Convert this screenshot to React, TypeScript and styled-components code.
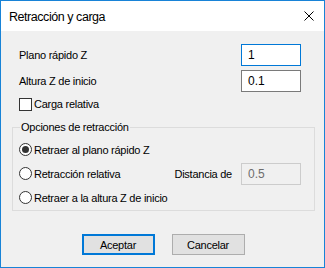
import React from 'react';
import styled, { createGlobalStyle } from 'styled-components';

const GlobalStyle = createGlobalStyle`
  html, body {
    margin: 0;
    padding: 0;
    background: #ffffff;
  }
  * {
    box-sizing: border-box;
  }
`;

const StyledWindow = styled.div`
  width: 325px;
  height: 268px;
  display: flex;
  flex-direction: column;
  border: 1px solid #1883d7;
  background: #f0f0f0;
  font-family: 'Liberation Sans', Arial, sans-serif;
  font-size: 11px;
  letter-spacing: -0.25px;
  color: #000000;
`;

const StyledTitleBar = styled.div`
  height: 30px;
  flex: none;
  display: flex;
  align-items: center;
  justify-content: space-between;
  padding: 0 10px 0 8px;
  background: #ffffff;
`;

const StyledTitle = styled.span`
  font-size: 12.5px;
  letter-spacing: -0.45px;
  padding-top: 1px;
`;

const StyledClose = styled.svg`
  width: 10px;
  height: 10px;
  display: block;
`;

const StyledBody = styled.div`
  flex: 1;
  display: flex;
  flex-direction: column;
  padding: 13px 9px 0 11px;
`;

const StyledFieldRow = styled.div<{ $gap?: number }>`
  height: 22px;
  display: flex;
  align-items: center;
  justify-content: space-between;
  padding: 0 14px 0 7px;
  margin-bottom: ${(p) => p.$gap ?? 0}px;
`;

const StyledInput = styled.div<{ $focused?: boolean; $disabled?: boolean }>`
  width: 60px;
  height: 22px;
  display: flex;
  align-items: center;
  padding: 0 6px;
  background: ${(p) => (p.$disabled ? '#f0f0f0' : '#ffffff')};
  border: 1px solid
    ${(p) => (p.$focused ? '#0078d7' : p.$disabled ? '#cccccc' : '#7a7a7a')};
  color: ${(p) => (p.$disabled ? '#6d6d6d' : '#000000')};
  font-size: 12px;
  letter-spacing: 0;
`;

const StyledCheckRow = styled.label`
  height: 14px;
  margin-top: 5px;
  display: flex;
  align-items: center;
  gap: 2px;
  padding-left: 7px;
`;

const StyledCheckbox = styled.span`
  width: 13px;
  height: 13px;
  flex: none;
  background: #ffffff;
  border: 1px solid #333333;
`;

const StyledGroup = styled.div`
  position: relative;
  margin-top: 16px;
  height: 84px;
  border: 1px solid #dcdcdc;
  display: flex;
  flex-direction: column;
  padding: 10px 13px 0 6px;
`;

const StyledLegend = styled.span`
  position: absolute;
  top: -8px;
  left: 7px;
  padding: 0 1px;
  background: #f0f0f0;
  line-height: 14px;
`;

const StyledRadioRow = styled.div`
  height: 24px;
  display: flex;
  align-items: center;
  gap: 2px;
  margin-bottom: 0.5px;
`;

const StyledRadio = styled.span<{ $checked?: boolean }>`
  width: 13px;
  height: 13px;
  flex: none;
  border-radius: 50%;
  border: 1px solid #333333;
  background: #ffffff;
  display: flex;
  align-items: center;
  justify-content: center;

  &::after {
    content: '';
    width: 7px;
    height: 7px;
    border-radius: 50%;
    background: ${(p) => (p.$checked ? '#333333' : 'transparent')};
  }
`;

const StyledSpacer = styled.span`
  flex: 1;
`;

const StyledSideLabel = styled.span`
  margin-right: 7px;
`;

const StyledButtons = styled.div`
  display: flex;
  justify-content: center;
  gap: 17px;
  margin-top: 23px;
  padding-right: 1px;
`;

const StyledButton = styled.div<{ $default?: boolean }>`
  width: 73px;
  height: 21px;
  display: flex;
  align-items: center;
  justify-content: center;
  background: #e1e1e1;
  border: ${(p) => (p.$default ? '2px solid #0078d7' : '1px solid #adadad')};
  font-size: 11px;
`;

const App: React.FC = () => {
  return (
    <>
      <GlobalStyle />
      <StyledWindow>
        <StyledTitleBar>
          <StyledTitle>Retracción y carga</StyledTitle>
          <StyledClose viewBox='0 0 10 10'>
            <path d='M0.5 0.5 L9.5 9.5 M9.5 0.5 L0.5 9.5' stroke='#000' strokeWidth='1' fill='none' />
          </StyledClose>
        </StyledTitleBar>
        <StyledBody>
          <StyledFieldRow $gap={4}>
            <span>Plano rápido Z</span>
            <StyledInput $focused>1</StyledInput>
          </StyledFieldRow>
          <StyledFieldRow>
            <span>Altura Z de inicio</span>
            <StyledInput>0.1</StyledInput>
          </StyledFieldRow>
          <StyledCheckRow>
            <StyledCheckbox />
            <span>Carga relativa</span>
          </StyledCheckRow>
          <StyledGroup>
            <StyledLegend>Opciones de retracción</StyledLegend>
            <StyledRadioRow>
              <StyledRadio $checked />
              <span>Retraer al plano rápido Z</span>
            </StyledRadioRow>
            <StyledRadioRow>
              <StyledRadio />
              <span>Retracción relativa</span>
              <StyledSpacer />
              <StyledSideLabel>Distancia de</StyledSideLabel>
              <StyledInput $disabled>0.5</StyledInput>
            </StyledRadioRow>
            <StyledRadioRow>
              <StyledRadio />
              <span>Retraer a la altura Z de inicio</span>
            </StyledRadioRow>
          </StyledGroup>
          <StyledButtons>
            <StyledButton $default>Aceptar</StyledButton>
            <StyledButton>Cancelar</StyledButton>
          </StyledButtons>
        </StyledBody>
      </StyledWindow>
    </>
  );
};

export default App;
